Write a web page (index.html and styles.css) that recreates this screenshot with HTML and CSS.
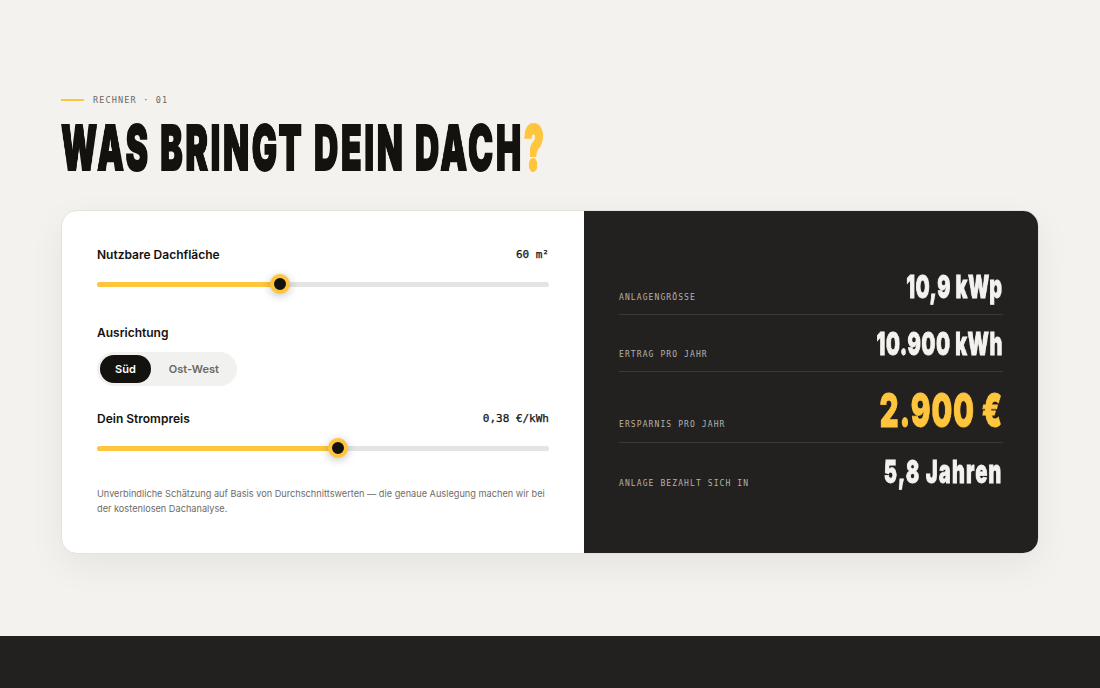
FILE: index.html
```html
<!DOCTYPE html>
<html lang="de">
<head>
<meta charset="utf-8">
<title>Rechner</title>
<link rel="stylesheet" href="styles.css">
</head>
<body>
<main class="section">
  <div class="eyebrow"><span class="eyebrow-line"></span><span>RECHNER · 01</span></div>
  <h1 class="headline"><span class="squeeze">WAS BRINGT DEIN DACH<em class="accent">?</em></span></h1>
  <div class="card">
    <div class="inputs">
      <div class="row-head"><span class="label">Nutzbare Dachfläche</span><span class="value">60 m²</span></div>
      <div class="slider"><div class="fill fill-a"><span class="thumb"></span></div></div>
      <div class="label orient">Ausrichtung</div>
      <div class="toggle"><span class="opt on">Süd</span><span class="opt">Ost-West</span></div>
      <div class="row-head second"><span class="label">Dein Strompreis</span><span class="value">0,38 €/kWh</span></div>
      <div class="slider"><div class="fill fill-b"><span class="thumb"></span></div></div>
      <p class="note">Unverbindliche Schätzung auf Basis von Durchschnittswerten — die genaue Auslegung machen wir bei der kostenlosen Dachanalyse.</p>
    </div>
    <div class="results">
      <div class="res"><span class="res-label">ANLAGENGRÖSSE</span><span class="res-val"><span class="squeeze-r">10,9 kWp</span></span></div>
      <div class="res"><span class="res-label">ERTRAG PRO JAHR</span><span class="res-val"><span class="squeeze-r">10.900 kWh</span></span></div>
      <div class="res big"><span class="res-label">ERSPARNIS PRO JAHR</span><span class="res-val"><span class="squeeze-r">2.900 €</span></span></div>
      <div class="res last"><span class="res-label">ANLAGE BEZAHLT SICH IN</span><span class="res-val"><span class="squeeze-r">5,8 Jahren</span></span></div>
    </div>
  </div>
</main>
<footer class="footer"></footer>
</body>
</html>
```
FILE: styles.css
```css
* { box-sizing: border-box; }
html, body { margin: 0; height: 688px; overflow: hidden; }
body { background: #f4f2ee; font-family: Inter, "Liberation Sans", sans-serif; color: #14120f; display: flex; flex-direction: column; }
.section { height: 636px; padding: 95px 61px 0; }
.eyebrow { display: flex; align-items: center; gap: 9px; height: 10px; font: 8.5px/10px "DejaVu Sans Mono", monospace; letter-spacing: 1.15px; color: #6b6862; }
.eyebrow-line { width: 23px; height: 2px; background: #ffc53d; }
.headline { margin: 10px 0 0; height: 66px; font: 900 62px/66px Inter, sans-serif; white-space: nowrap; }
.squeeze { display: inline-block; transform: scaleX(0.54); transform-origin: left center; will-change: transform; -webkit-text-stroke: 2px #14120f; letter-spacing: 5.2px; }
.accent { font-style: normal; color: #ffc53d; -webkit-text-stroke: 2px #ffc53d; }
.card { margin-top: 29px; height: 344px; display: flex; background: #fff; border: 1px solid #e4e2dd; border-radius: 16px; overflow: hidden; box-shadow: 0 12px 36px rgba(20,18,15,.06); }
.inputs { width: 522px; padding: 34px 35px 0; }
.row-head { display: flex; justify-content: space-between; align-items: center; height: 20px; }
.label { font-size: 12px; font-weight: 600; line-height: 20px; color: #14120f; }
.value { font: 11px/20px "DejaVu Sans Mono", monospace; -webkit-text-stroke: .25px #14120f; }
.slider { margin-top: 17px; height: 5px; border-radius: 3px; background: #e4e4e2; }
.fill { position: relative; height: 5px; border-radius: 3px; background: #ffc53d; }
.fill-a { width: 183px; }
.fill-b { width: 241px; }
.thumb { position: absolute; right: -10px; top: -8px; width: 20px; height: 20px; border-radius: 50%; background: #14120f; border: 4px solid #ffc53d; box-shadow: 0 2px 8px rgba(20,18,15,.25); }
.orient { margin-top: 36px; }
.toggle { display: inline-flex; gap: 3px; margin-top: 9px; padding: 3px; border-radius: 17px; background: #f1f1ef; height: 34px; }
.opt { display: flex; align-items: center; padding: 0 15px; border-radius: 14px; font-size: 11px; font-weight: 600; color: #6b6862; }
.opt.on { background: #14120f; color: #fff; }
.second { margin-top: 23px; }
.note { margin: 35px 0 0; font-size: 9.2px; line-height: 15px; color: #6f6c67; }
.results { flex: 1; background: #232120; padding: 47px 35px 0; }
.res { display: flex; justify-content: space-between; align-items: flex-end; height: 57px; border-bottom: 1px solid #3a3836; padding-bottom: 11px; }
.res.big { height: 71px; padding-bottom: 12px; }
.res.last { border-bottom: 0; }
.res-label { font: 8px/10px "DejaVu Sans Mono", monospace; letter-spacing: 1.1px; color: #b5b2ab; }
.res-val { font: 900 32px/36px Inter, sans-serif; color: #f4f2ee; white-space: nowrap; position: relative; top: 2px; }
.squeeze-r { display: inline-block; transform: scaleX(0.62); transform-origin: right center; will-change: transform; -webkit-text-stroke: .8px currentColor; letter-spacing: .8px; }
.big .res-val { font-size: 47px; line-height: 50px; color: #ffc53d; top: 5px; }
.big .squeeze-r { letter-spacing: 1.6px; }
.last .res-val { top: 1px; }
.last .squeeze-r { letter-spacing: 2px; }
.footer { height: 52px; background: #232120; }
```
